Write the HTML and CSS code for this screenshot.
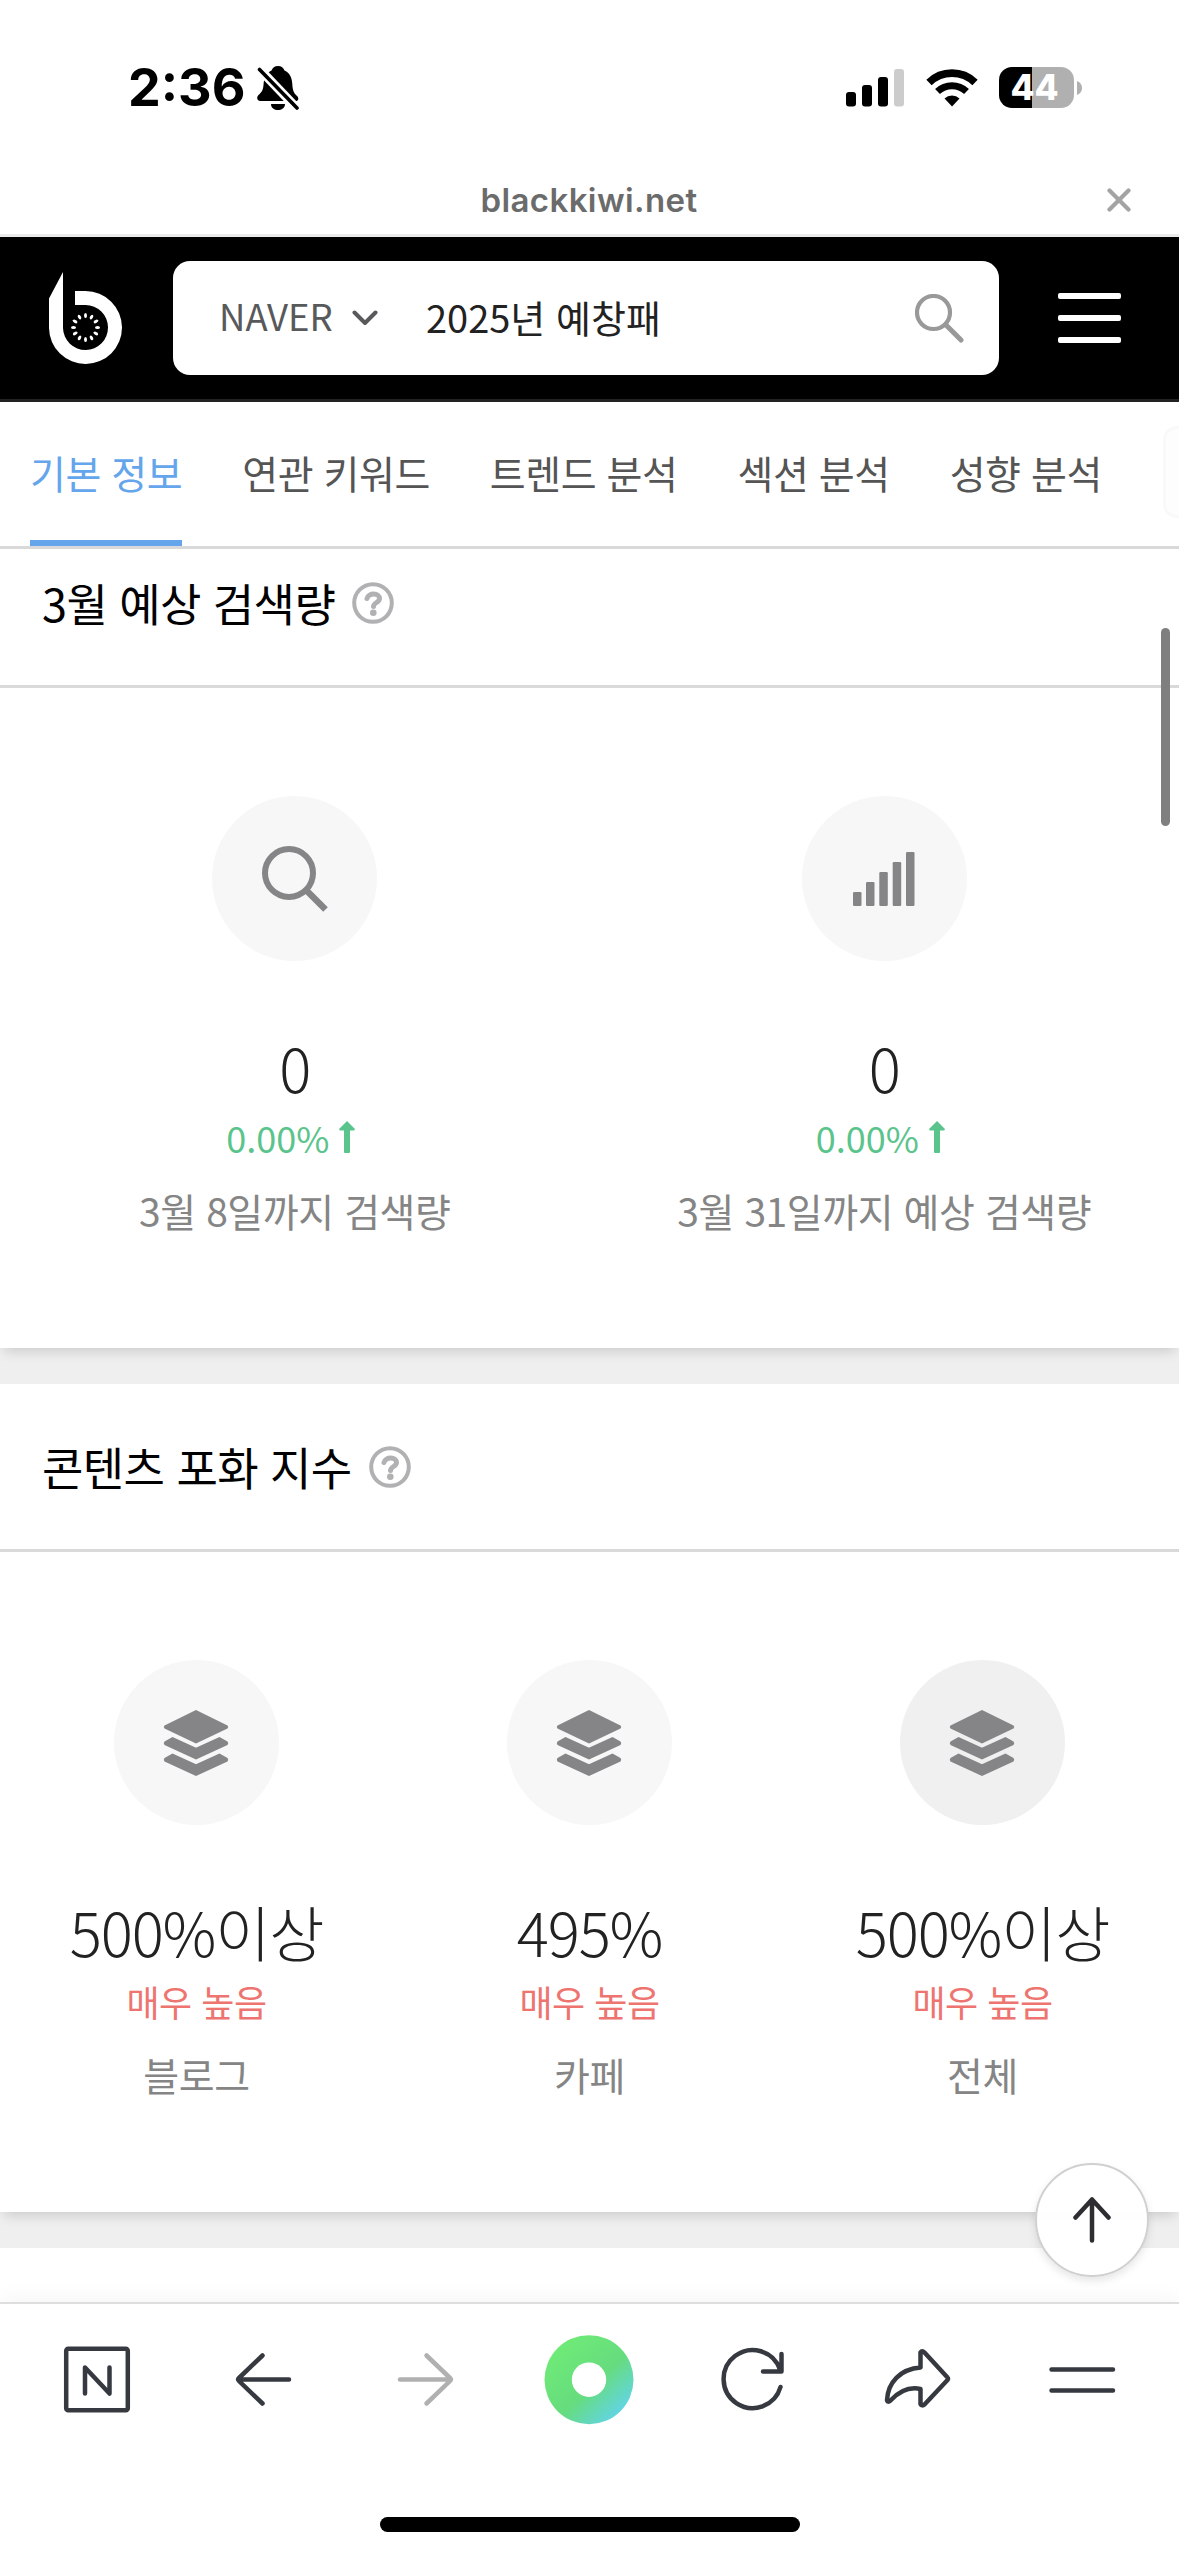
FILE: index.html
```html
<!DOCTYPE html>
<html lang="ko">
<head>
<meta charset="utf-8">
<title>blackkiwi.net</title>
<link rel="stylesheet" href="styles.css">
</head>
<body>
<svg class="defs" width="0" height="0" aria-hidden="true">
  <defs>
    <symbol id="layers" viewBox="0 0 66 66">
      <path d="M33 0 64.500 15.500Q66 17 64.500 18.500L33 33.500 1.500 18.500Q0 17 1.500 15.500Z"/>
      <path d="M9.500 27 32 37.300Q33 37.700 34 37.300L56.500 27 64.500 31.500Q66 33 64.500 35L33 49.500 1.500 35Q0 33 1.500 31.500Z"/>
      <path d="M9.500 43.500 32 53.800Q33 54.200 34 53.800L56.500 43.500 64.500 48Q66 49.500 64.500 51.500L33 66 1.500 51.500Q0 49.500 1.500 48Z"/>
    </symbol>
    <symbol id="help" viewBox="0 0 42 42">
      <circle cx="21" cy="21" r="18.800" fill="none" stroke="#b1b1b3" stroke-width="4"/>
      <path d="M15 16.500C16.500 10.500 27.500 10.500 27.500 16.800 27.500 20.500 21.500 20.500 21.500 24.500" fill="none" stroke="#b1b1b3" stroke-width="5" stroke-linecap="round"/>
      <circle cx="21.300" cy="30.800" r="3.300" fill="#b1b1b3"/>
    </symbol>
    <symbol id="up" viewBox="0 0 16 32">
      <path d="M8 0 15.500 7.500Q16.500 9.500 14.500 9.500H11V31Q11 32 10 32H6Q5 32 5 31V9.500H1.500Q-.500 9.500 .500 7.500Z" fill="#5ac48c"/>
    </symbol>
  </defs>
</svg>
<div class="screen">
  <header class="status">
    <div class="status-left">
      <span class="time">2:36</span>
      <svg class="bell" viewBox="0 0 42 44">
        <path d="M21 0C24.500 0 26.500 2 27.500 4.500 33 7 35 12 35.300 18 35.700 25 37 27 39.500 29.500 42.500 32 41.500 35 38.500 35H3.500C-.500 35-.500 31 1.500 29 5 26 6.200 24 6.600 18 7 12 9.500 7 14.500 4.500 15.500 2 17.500 0 21 0ZM14 38H28C28 42 24.500 44 21 44 17.500 44 14 42 14 38Z"/>
        <path d="M1 1.500 41 43.500" stroke="#fff" stroke-width="9"/>
        <path d="M2.500 3.500 40 42" stroke="#000" stroke-width="3.600" stroke-linecap="round"/>
      </svg>
    </div>
    <div class="status-right">
      <svg class="signal" viewBox="0 0 58 38">
        <rect x="0" y="23" width="10" height="14.500" rx="3"/><rect x="16" y="16" width="10" height="21.500" rx="3"/>
        <rect x="32" y="8" width="10" height="29.500" rx="3"/><rect x="48" y="0" width="10" height="37.500" rx="3" fill="#ccc"/>
      </svg>
      <svg class="wifi" viewBox="0 0 52 38">
        <path d="M3 13.500A33 33 0 0 1 49 13.500" fill="none" stroke="#000" stroke-width="7.600"/>
        <path d="M11.500 22.500A21 21 0 0 1 40.500 22.500" fill="none" stroke="#000" stroke-width="7"/>
        <path d="M18.500 29.500A11 11 0 0 1 33.500 29.500L26 37.500Z"/>
      </svg>
      <div class="battery"><span>44</span></div>
      <svg class="nub" viewBox="0 0 5 14"><path d="M0 0Q5 2 5 7T0 14Z" fill="#b0b0b0"/></svg>
    </div>
  </header>

  <div class="address">
    <span class="host">blackkiwi.net</span>
    <svg class="close" viewBox="0 0 24 24"><path d="M2.500 2.500 21.500 21.500M21.500 2.500 2.500 21.500" stroke="#a3a3a3" stroke-width="4.200" stroke-linecap="round"/></svg>
  </div>

  <div class="topbar">
    <svg class="logo" viewBox="0 0 73 92">
      <path d="M14 0V56A22.500 22.500 0 1 0 36.500 33H26V19H36.500A36.500 36.500 0 1 1 0 56V26.500Z" fill="#fff"/>
      <g transform="translate(36.500 55.500)" fill="#fff">
        <ellipse cy="-12" rx="1.500" ry="2.500"/>
        <ellipse cy="-12" rx="1.500" ry="2.500" transform="rotate(30)"/>
        <ellipse cy="-12" rx="1.500" ry="2.500" transform="rotate(60)"/>
        <ellipse cy="-12" rx="1.500" ry="2.500" transform="rotate(90)"/>
        <ellipse cy="-12" rx="1.500" ry="2.500" transform="rotate(120)"/>
        <ellipse cy="-12" rx="1.500" ry="2.500" transform="rotate(150)"/>
        <ellipse cy="-12" rx="1.500" ry="2.500" transform="rotate(180)"/>
        <ellipse cy="-12" rx="1.500" ry="2.500" transform="rotate(210)"/>
        <ellipse cy="-12" rx="1.500" ry="2.500" transform="rotate(240)"/>
        <ellipse cy="-12" rx="1.500" ry="2.500" transform="rotate(270)"/>
        <ellipse cy="-12" rx="1.500" ry="2.500" transform="rotate(300)"/>
        <ellipse cy="-12" rx="1.500" ry="2.500" transform="rotate(330)"/>
      </g>
    </svg>
    <div class="search">
      <span class="engine">NAVER</span>
      <svg class="chevron" viewBox="0 0 26 16"><path d="M2.500 2.500 13 13 23.500 2.500" fill="none" stroke="#58595b" stroke-width="4" stroke-linecap="round" stroke-linejoin="round"/></svg>
      <span class="query">2025년 예창패</span>
      <svg class="lens" viewBox="0 0 49 49"><g fill="none" stroke="#999" stroke-width="4.200" stroke-linecap="round"><circle cx="18.500" cy="18.500" r="16.500"/><path d="M31 31 46 46" stroke-width="5"/></g></svg>
    </div>
    <div class="menu"><i></i><i></i><i></i></div>
  </div>

  <nav class="tabs">
    <a class="active">기본 정보</a><a>연관 키워드</a><a>트렌드 분석</a><a>섹션 분석</a><a>성향 분석</a>
    <div class="more"></div>
  </nav>

  <main class="content">
    <section class="card">
      <h2>3월 예상 검색량 <svg class="help"><use href="#help"/></svg></h2>
      <div class="stats">
        <div class="stat">
          <div class="disc"><svg width="66" height="66" viewBox="0 0 66 66"><circle cx="27" cy="27" r="24" fill="none" stroke="#858587" stroke-width="6"/><path d="M44.500 44.500 63.500 63.500" stroke="#858587" stroke-width="6.600"/></svg></div>
          <strong>0</strong><span class="change rise">0.00% <svg class="up"><use href="#up"/></svg></span><span class="label">3월 8일까지 검색량</span>
        </div>
        <div class="stat">
          <div class="disc"><svg class="bars" width="62" height="54" viewBox="0 0 62 54" fill="#858587"><rect x="0" y="40" width="8.500" height="14" rx="1.200"/><rect x="13" y="30" width="8.500" height="24" rx="1.200"/><rect x="26.300" y="20" width="8.500" height="34" rx="1.200"/><rect x="39.700" y="10" width="8.500" height="44" rx="1.200"/><rect x="53" y="0" width="8.500" height="54" rx="1.200"/></svg></div>
          <strong>0</strong><span class="change rise">0.00% <svg class="up"><use href="#up"/></svg></span><span class="label">3월 31일까지 예상 검색량</span>
        </div>
      </div>
    </section>
    <section class="card">
      <h2>콘텐츠 포화 지수 <svg class="help"><use href="#help"/></svg></h2>
      <div class="stats">
        <div class="stat"><div class="disc"><svg class="layers"><use href="#layers"/></svg></div><strong>500%이상</strong><span class="change high">매우 높음</span><span class="label">블로그</span></div>
        <div class="stat"><div class="disc"><svg class="layers"><use href="#layers"/></svg></div><strong>495%</strong><span class="change high">매우 높음</span><span class="label">카페</span></div>
        <div class="stat"><div class="disc total"><svg class="layers"><use href="#layers"/></svg></div><strong>500%이상</strong><span class="change high">매우 높음</span><span class="label">전체</span></div>
      </div>
    </section>
    <section class="card next"></section>
    <div class="scrollbar"></div>
    <div class="to-top"><svg width="38" height="46" viewBox="0 0 38 46"><path d="M19 2.500V43.500M2.500 20.500 19 2.500 35.500 20.500" fill="none" stroke="#2d2d32" stroke-width="4.500" stroke-linecap="round" stroke-linejoin="round"/></svg></div>
  </main>

  <footer class="toolbar">
    <div class="tools">
      <svg viewBox="0 0 90 90"><rect x="14.200" y="13.700" width="61.600" height="61.600" rx="2"/><path d="M33 58.500V32.500L57.500 58.500V32.500"/></svg>
      <svg viewBox="0 0 90 90"><path d="M73 44.500H22M46.500 20.500 23 43Q21.500 44.500 23 46L46.500 68.500"/></svg>
      <svg class="off" viewBox="0 0 90 90"><path d="M20 44.500H71M46.500 20.500 70 43Q71.500 44.500 70 46L46.500 68.500"/></svg>
      <svg viewBox="0 0 90 90">
        <defs><linearGradient id="ring" x1=".1" y1=".1" x2=".86" y2=".9"><stop offset="0" stop-color="#70ec76"/><stop offset=".58" stop-color="#66dc7e"/><stop offset="1" stop-color="#62d4ea"/></linearGradient></defs>
        <circle cx="45" cy="44.700" r="44.500" fill="url(#ring)" stroke="none"/><circle cx="45" cy="44.700" r="17.200" fill="#fff" stroke="none"/>
      </svg>
      <svg viewBox="0 0 90 90"><path d="M71.500 52A29 29 0 1 1 71 34.500M72.500 19V36.500H54"/></svg>
      <svg viewBox="0 0 90 90"><path d="M47.500 17.500Q49 15 51.500 17.500L74.500 42.500Q75.500 43.500 74.500 45L51.500 69.500Q49 71.500 47.500 69V54C36 51.500 25.500 57 17.500 65.500Q14.500 68 14 65C15 47 27.500 34 47.500 32.500Z"/></svg>
      <svg viewBox="0 0 90 90"><path d="M14.500 34.500H76M14.500 55.500H76"/></svg>
    </div>
    <div class="home"></div>
  </footer>
</div>
</body>
</html>
```
FILE: styles.css
```css
* { box-sizing: border-box; }
body { margin: 0; background: #fff; font-family: "Noto Sans CJK KR", sans-serif; }
.defs { position: absolute; }
.screen { width: 1179px; height: 2556px; display: flex; flex-direction: column; overflow: hidden; background: #fff; }
svg { display: block; flex: none; }

.status { height: 168px; flex: none; padding: 66px 97px 0 128px; display: flex; justify-content: space-between; align-items: flex-start; }
.status-left, .status-right { display: flex; align-items: flex-start; }
.time { font: 700 52px/44px Inter, sans-serif; width: 129px; white-space: nowrap; }
.bell { width: 42px; height: 44px; }
.signal { width: 58px; height: 38px; margin-top: 3px; }
.wifi { width: 52px; height: 38px; margin: 3px 21px 0 22px; }
.battery { width: 75px; height: 41px; margin-top: 1px; border-radius: 13px; background: linear-gradient(90deg, #000 33px, #b0b0b0 33px); color: #fff; display: flex; justify-content: center; }
.battery span { font: 800 35px/41px Inter, sans-serif; margin-left: -4px; }
.nub { width: 5px; height: 14px; margin: 15px 0 0 3px; }

.address { height: 69px; flex: none; display: flex; align-items: center; justify-content: flex-end; padding: 0 48px 3px 0; border-bottom: 3px solid #ebebeb; }
.host { flex: 1; padding-left: 71px; text-align: center; font: 600 33px/48px Inter, sans-serif; letter-spacing: .4px; color: #6b6b6b; }
.close { width: 24px; height: 24px; }

.topbar { height: 165px; flex: none; display: flex; align-items: center; background: #000; border-bottom: 3px solid #222; padding-left: 49px; }
.logo { width: 73px; height: 92px; margin-right: 51px; }
.search { width: 826px; height: 114px; border-radius: 17px; background: #fff; display: flex; align-items: center; padding-left: 46px; }
.engine { font-size: 36.500px; line-height: 50px; color: #58595b; width: 133px; padding-bottom: 4px; }
.chevron { width: 26px; height: 16px; }
.query { flex: 1; margin-left: 48px; font-size: 38px; line-height: 50px; padding-bottom: 3px; color: #222; white-space: nowrap; }
.lens { width: 49px; height: 49px; margin-right: 35px; }
.menu { width: 63px; margin-left: 59px; display: flex; flex-direction: column; gap: 16px; }
.menu i { height: 6px; border-radius: 2px; background: #fff; }

.tabs { position: relative; z-index: 1; height: 147px; flex: none; background: #fff; border-bottom: 3px solid #d9d9d9; padding-left: 30px; display: flex; gap: 60px; overflow: hidden; }
.tabs a { font-size: 39px; letter-spacing: -.45px; line-height: 140px; height: 144px; color: #555; white-space: nowrap; flex: none; }
.tabs .active { color: #64a5ec; border-bottom: 6px solid #64a5ec; }
.more { position: absolute; right: -20px; top: 24px; width: 36px; height: 92px; border: 3px solid #f9f9f9; border-radius: 14px; background: #fdfdfd; }

.content { position: relative; flex: 1; min-height: 0; margin-top: -29px; overflow: hidden; background: #efeff0; display: flex; flex-direction: column; gap: 36px; }
.card { position: relative; height: 828px; flex: none; background: #fff; box-shadow: 0 7px 12px -4px rgba(0, 0, 0, .16); }
.card h2 { margin: 0; height: 168px; border-bottom: 3px solid #d9d9d9; padding: 0 0 0 42px; display: flex; align-items: center; gap: 17px; font-size: 45px; letter-spacing: -.6px; font-weight: 400; line-height: 66px; color: #000; }
.help { width: 42px; height: 42px; }
.stats { height: 660px; display: flex; padding-top: 108px; }
.stat { flex: 1 1 0; display: flex; flex-direction: column; align-items: center; }
.disc { width: 165px; height: 165px; border-radius: 50%; background: #f7f7f7; display: flex; align-items: center; justify-content: center; }
.disc.total { background: #f0f0f0; }
.layers { width: 66px; height: 66px; margin-right: 1px; fill: #858587; }
.stat strong { margin-top: 62px; font-size: 60px; letter-spacing: -1.200px; font-weight: 300; line-height: 88px; color: #222; }
.change { font-size: 36px; line-height: 52px; display: flex; align-items: center; gap: 10px; }
.rise { color: #5ac48c; padding-right: 8px; }
.high { color: #ee7470; letter-spacing: -.5px; }
.up { width: 16px; height: 32px; }
.label { margin-top: 19px; font-size: 39px; letter-spacing: -.45px; line-height: 57px; color: #858585; }
.card.next { height: 200px; }
.scrollbar { position: absolute; left: 1161px; top: 108px; width: 9px; height: 198px; border-radius: 5px; background: #7f7f7f; }
.to-top { position: absolute; left: 1035px; top: 1643px; width: 114px; height: 114px; border: 2px solid #d0d0d2; border-radius: 50%; background: rgba(255, 255, 255, .96); box-shadow: 0 4px 8px rgba(0, 0, 0, .1); display: flex; align-items: center; justify-content: center; }

.toolbar { position: relative; height: 254px; flex: none; background: #fff; border-top: 2px solid #dedede; box-shadow: 0 -4px 20px rgba(0, 20, 0, .04); display: flex; flex-direction: column; align-items: center; }
.tools { width: 1179px; padding: 31px 51.500px 0; display: flex; justify-content: space-between; }
.tools svg { width: 90px; height: 90px; fill: none; stroke: #363a40; stroke-width: 4.500; stroke-linecap: round; stroke-linejoin: round; }
.tools .off { stroke: #b0b0b0; }
.home { width: 420px; height: 15px; margin-top: 92px; border-radius: 8px; background: #000; }
```
